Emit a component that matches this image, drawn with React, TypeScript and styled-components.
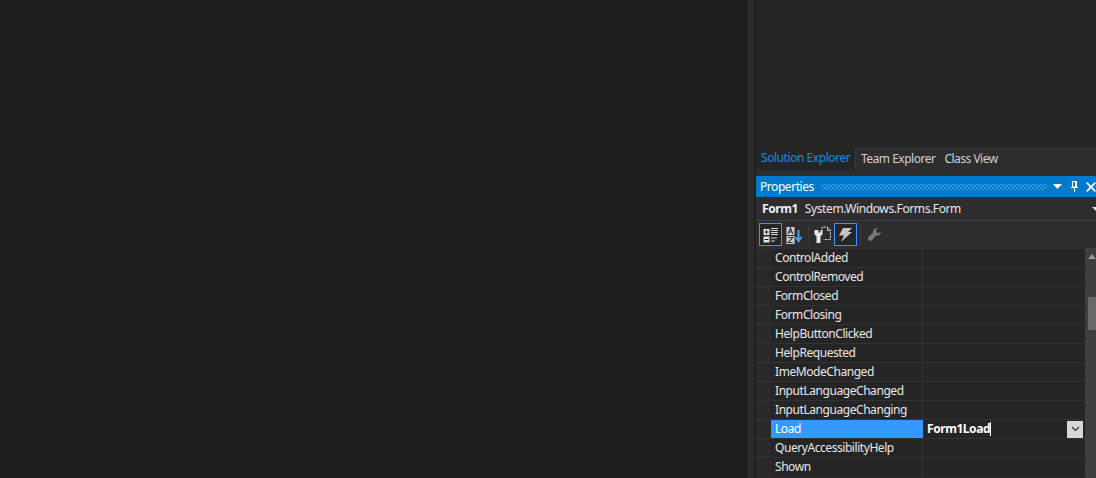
import React from 'react';
import styled, { createGlobalStyle } from 'styled-components';

const GlobalStyle = createGlobalStyle`
  html, body {
    margin: 0;
    padding: 0;
    background: #1e1e1e;
    overflow: hidden;
  }
`;

// Styles
const Window = styled.div`
  display: flex;
  width: 1096px;
  height: 478px;
  overflow: hidden;
  font-family: 'Noto Sans', 'Open Sans', sans-serif;
  font-size: 12px;
  letter-spacing: -0.44px;
  color: #f1f1f1;
`;

const Editor = styled.div`
  flex: 0 0 748px;
  background: #1e1e1e;
`;

const Splitter = styled.div`
  flex: 0 0 8px;
  box-sizing: border-box;
  background: #2a2a2c;
  border-left: 1px solid #333336;
  border-right: 2px solid #1f1f20;
`;

const Panel = styled.div`
  flex: 1;
  display: flex;
  flex-direction: column;
  min-width: 0;
  background: #252526;
`;

const Blank = styled.div`
  flex: 0 0 148px;
  background: #252526;
`;

const TabStrip = styled.div`
  flex: 0 0 22px;
  display: flex;
  align-items: stretch;
  background: #2d2d30;
`;

const ActiveTab = styled.div`
  flex: 0 0 99px;
  box-sizing: border-box;
  padding-left: 5px;
  line-height: 20px;
  color: #0e8fe0;
  background: #252526;
`;

const TabRest = styled.div`
  flex: 1;
  display: flex;
  gap: 9px;
  padding-left: 5px;
  line-height: 20px;
  letter-spacing: -0.5px;
  color: #d0d0d0;
  background: #2d2d30;
  border-top: 1px solid #3a3a3d;
  border-left: 1px solid #3a3a3d;
`;

const TabGap = styled.div`
  flex: 0 0 6px;
  background: #2d2d30;
`;

const TitleBar = styled.div`
  flex: 0 0 21px;
  display: flex;
  align-items: center;
  padding-left: 4px;
  background: #007acc;
  color: #ffffff;
`;

const Dots = styled.div`
  flex: 1;
  height: 6px;
  margin: 0 6px 0 7px;
  background-image: radial-gradient(circle at center, #3596d8 0.8px, transparent 1px),
    radial-gradient(circle at center, #3596d8 0.8px, transparent 1px);
  background-size: 4px 4px;
  background-position: 0 0, 2px 2px;
`;

const TitleButtons = styled.div`
  flex: 0 0 42px;
  display: flex;
  align-items: center;
`;

const PinIcon = styled.svg`
  margin: 0 8px 0 9px;
`;

const ObjectRow = styled.div`
  flex: 0 0 24px;
  display: flex;
  align-items: center;
  gap: 7px;
  box-sizing: border-box;
  padding-left: 6px;
  background: #2d2d30;
  border-bottom: 1px solid #3f3f42;
`;

const ObjectName = styled.span`
  font-weight: 700;
`;

const ObjectType = styled.span`
  flex: 1;
  letter-spacing: -0.4px;
  color: #e6e6e6;
`;

const Toolbar = styled.div`
  flex: 0 0 27px;
  display: flex;
  align-items: center;
  padding-left: 3px;
  background: #2d2d30;
`;

const ToolButton = styled.div<{ $checked?: boolean }>`
  width: 23px;
  height: 23px;
  box-sizing: border-box;
  display: flex;
  align-items: center;
  justify-content: center;
  border: 1px solid ${(p) => (p.$checked ? '#3399ff' : 'transparent')};
  background: ${(p) => (p.$checked ? '#252527' : 'transparent')};
`;

const ToolSep = styled.div`
  width: 6px;
  height: 20px;
  background: linear-gradient(#3a3a3d, #3a3a3d) center / 1px 100% no-repeat;
`;

const GridArea = styled.div`
  flex: 1;
  display: flex;
  min-height: 0;
`;

const Rows = styled.div`
  flex: 0 0 329px;
  background: #29292b;
`;

const Row = styled.div`
  display: grid;
  grid-template-columns: 15px 152px 1fr;
  height: 19px;
  box-sizing: border-box;
  border-top: 1px solid #333335;
`;

const NameCell = styled.div<{ $selected?: boolean }>`
  padding-left: 4px;
  line-height: 18px;
  white-space: nowrap;
  color: ${(p) => (p.$selected ? '#ffffff' : '#e8e8e8')};
  background: ${(p) => (p.$selected ? '#3399ff' : '#252526')};
  border-right: 1px solid ${(p) => (p.$selected ? '#3399ff' : '#333335')};
`;

const ValueCell = styled.div`
  display: flex;
  align-items: center;
  justify-content: space-between;
  padding-left: 4px;
  background: #252526;
`;

const ValueText = styled.span`
  font-weight: 700;
  color: #ffffff;
  border-right: 1px solid #ffffff;
  line-height: 14px;
`;

const DropButton = styled.div`
  width: 16px;
  height: 17px;
  margin-right: 2px;
  display: flex;
  align-items: center;
  justify-content: center;
  background: #d8d8d8;
`;

const ScrollTrack = styled.div`
  flex: 1;
  position: relative;
  background: #3e3e42;
`;

const ScrollThumb = styled.div`
  position: absolute;
  top: 49px;
  left: 3px;
  right: 0;
  height: 33px;
  background: #686868;
`;

const ScrollArrow = styled.svg`
  position: absolute;
  top: 6px;
  left: 3px;
`;

const events = [
  'ControlAdded',
  'ControlRemoved',
  'FormClosed',
  'FormClosing',
  'HelpButtonClicked',
  'HelpRequested',
  'ImeModeChanged',
  'InputLanguageChanged',
  'InputLanguageChanging',
  'Load',
  'QueryAccessibilityHelp',
  'Shown',
];

const App: React.FC = () => {
  return (
    <Window>
      <GlobalStyle />
      <Editor />
      <Splitter />
      <Panel>
        <Blank />
        <TabStrip>
          <ActiveTab>Solution Explorer</ActiveTab>
          <TabRest>
            <span>Team Explorer</span>
            <span>Class View</span>
          </TabRest>
        </TabStrip>
        <TabGap />
        <TitleBar>
          <span>Properties</span>
          <Dots />
          <TitleButtons>
            <svg width="9" height="5" viewBox="0 0 9 5">
              <path d="M0 0h9L4.5 5z" fill="#fff" />
            </svg>
            <PinIcon width="7" height="11" viewBox="0 0 7 11">
              <path d="M1.500 0.500h4v5.500h-4zM0 6.500h7M3.500 7v4" fill="none" stroke="#fff" strokeWidth="1.100" />
              <path d="M4 0.500h1.500V6H4z" fill="#fff" />
            </PinIcon>
            <svg width="10" height="10" viewBox="0 0 10 10">
              <path d="M0.700 0.700l8.600 8.600M9.300 0.700l-8.600 8.600" stroke="#fff" strokeWidth="1.700" />
            </svg>
          </TitleButtons>
        </TitleBar>
        <ObjectRow>
          <ObjectName>Form1</ObjectName>
          <ObjectType>System.Windows.Forms.Form</ObjectType>
          <svg width="4" height="4" viewBox="0 0 4 4">
            <path d="M0 0h8L4 4z" fill="#e6e6e6" />
          </svg>
        </ObjectRow>
        <Toolbar>
          <ToolButton $checked>
            <svg width="16" height="16" viewBox="0 0 16 16">
              <path d="M0.500 2h6v6h-6zM0.500 9.500h6v6h-6z" fill="#e4e4e4" />
              <path d="M1.500 5h4M3.500 3v4M1.500 12.500h4" stroke="#222" strokeWidth="1" />
              <path d="M8 1.500h7M8 3.500h7M8 5.500h7M8 7.500h7M8 11h6M8 14h4" stroke="#d8d8d8" strokeWidth="1" />
            </svg>
          </ToolButton>
          <ToolButton>
            <svg width="16" height="18" viewBox="0 0 16 18">
              <path d="M0.500 1h8v8h-8zM0.500 10h8v8h-8z" fill="#d0d0d0" />
              <path d="M2.200 8l2.300-6 2.300 6M3 6h3M2.300 11.500h4.400l-4.400 5h4.400" fill="none" stroke="#2d2d30" strokeWidth="1.100" />
              <path d="M12.500 4v11M9.500 11l3 4 3-4" fill="none" stroke="#3fa4ee" strokeWidth="2" />
            </svg>
          </ToolButton>
          <ToolSep />
          <ToolButton>
            <svg width="17" height="17" viewBox="0 0 17 17">
              <path d="M8 3V1h5.500l3 3v9.500H9.500" fill="none" stroke="#c8c8c8" strokeWidth="1" strokeDasharray="2.500 1" />
              <path d="M13.500 1v3.500h3" fill="none" stroke="#c8c8c8" strokeWidth="1" />
              <path d="M0.500 4v4.500l2 1.500v7h4v-7l2-1.500V4H6.500v2.500h-2V4z" fill="#e8e8e8" />
            </svg>
          </ToolButton>
          <ToolButton $checked>
            <svg width="13" height="14" viewBox="0 0 13 14">
              <path d="M4 0h9L9 4h4L2 14l3-6.500H0z" fill="#c4c4c4" />
            </svg>
          </ToolButton>
          <ToolSep />
          <ToolButton>
            <svg width="13" height="13" viewBox="0 0 13 13">
              <path d="M13 3.500a4.200 4.200 0 0 1-5.200 4.100L4.200 12a2.400 2.400 0 0 1-3.500-3.300l4.300-3.900A4.200 4.200 0 0 1 9.800 0L8 2.200l.5 2.300 2.300.5z" fill="#7a7a7a" />
            </svg>
          </ToolButton>
        </Toolbar>
        <GridArea>
          <Rows>
            {events.map((name) => {
              const selected = name === 'Load';
              return (
                <Row key={name}>
                  <span />
                  <NameCell $selected={selected}>{name}</NameCell>
                  <ValueCell>
                    {selected && <ValueText>Form1Load</ValueText>}
                    {selected && (
                      <DropButton>
                        <svg width="9" height="6" viewBox="0 0 9 6">
                          <path d="M1 1l3.500 3.500L8 1" fill="none" stroke="#333" strokeWidth="1.200" />
                        </svg>
                      </DropButton>
                    )}
                  </ValueCell>
                </Row>
              );
            })}
          </Rows>
          <ScrollTrack>
            <ScrollArrow width="8" height="5" viewBox="0 0 8 5">
              <path d="M0 5L4 0l4 5z" fill="#999" />
            </ScrollArrow>
            <ScrollThumb />
          </ScrollTrack>
        </GridArea>
      </Panel>
    </Window>
  );
};

export default App;
